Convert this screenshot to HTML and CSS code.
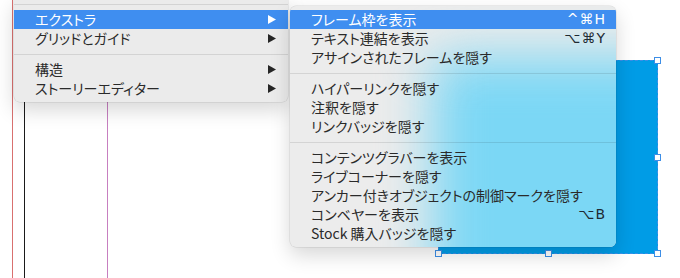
FILE: index.html
```html
<!DOCTYPE html>
<html lang="ja">
<head>
    <meta charset="UTF-8">
    <title>InDesign 表示メニュー</title>
    <link rel="stylesheet" href="styles.css">
</head>
<body>
    <div class="canvas">
        <!-- guides on the page -->
        <div class="guide guide-red"></div>
        <div class="guide guide-black"></div>
        <div class="guide guide-pink"></div>

        <!-- selected frame -->
        <div class="frame">
            <span class="handle h-tl"></span>
            <span class="handle h-tr"></span>
            <span class="handle h-mr"></span>
            <span class="handle h-bl"></span>
            <span class="handle h-bm"></span>
            <span class="handle h-br"></span>
        </div>

        <!-- main menu -->
        <div class="menu menu-main">
            <div class="sep"></div>
            <div class="item active"><span>エクストラ</span><svg class="arrow" viewBox="0 0 8 9"><polygon points="0,0 8,4.5 0,9"/></svg></div>
            <div class="item"><span>グリッドとガイド</span><svg class="arrow" viewBox="0 0 8 9"><polygon points="0,0 8,4.5 0,9"/></svg></div>
            <div class="sep"></div>
            <div class="item"><span>構造</span><svg class="arrow" viewBox="0 0 8 9"><polygon points="0,0 8,4.5 0,9"/></svg></div>
            <div class="item"><span>ストーリーエディター</span><svg class="arrow" viewBox="0 0 8 9"><polygon points="0,0 8,4.5 0,9"/></svg></div>
        </div>

        <!-- submenu (the ::before glow is the blurred frame showing through) -->
        <div class="menu menu-sub">
            <div class="item active"><span>フレーム枠を表示</span><span class="key">^⌘H</span></div>
            <div class="item"><span>テキスト連結を表示</span><span class="key">⌥⌘Y</span></div>
            <div class="item"><span>アサインされたフレームを隠す</span></div>
            <div class="sep"></div>
            <div class="item"><span>ハイパーリンクを隠す</span></div>
            <div class="item"><span>注釈を隠す</span></div>
            <div class="item"><span>リンクバッジを隠す</span></div>
            <div class="sep"></div>
            <div class="item"><span>コンテンツグラバーを表示</span></div>
            <div class="item"><span>ライブコーナーを隠す</span></div>
            <div class="item"><span>アンカー付きオブジェクトの制御マークを隠す</span></div>
            <div class="item"><span>コンベヤーを表示</span><span class="key">⌥B</span></div>
            <div class="item"><span>Stock 購入バッジを隠す</span></div>
        </div>
    </div>
</body>
</html>
```
FILE: styles.css
```css
/* page canvas behind the menus */
body {
    margin: 0;
    background: #ffffff;
    font-family: "Noto Sans CJK JP", "Noto Sans", sans-serif;
    overflow: hidden;
}
.canvas {
    position: relative;
    width: 680px;
    height: 278px;
}
.guide {
    position: absolute;
    top: 0;
    bottom: 0;
    width: 1px;
}
.guide-red { left: 12px; background: #d9706f; }
.guide-black { left: 24px; background: #1a1a1a; }
.guide-pink { left: 107px; background: #c77fc0; }

/* the selected blue frame */
.frame {
    position: absolute;
    left: 438px;
    top: 60px;
    width: 220px;
    height: 194px;
    box-sizing: border-box;
    background: #009ce6;
    border: 1px dashed #3d8ee6;
}
.handle {
    position: absolute;
    width: 5px;
    height: 5px;
    background: #ffffff;
    border: 1px solid #3d8ee6;
}
.h-tl { left: -4px; top: -4px; }
.h-tr { right: -4px; top: -4px; }
.h-mr { right: -4px; top: 93px; }
.h-bl { left: -4px; bottom: -4px; }
.h-bm { left: 106px; bottom: -4px; }
.h-br { right: -4px; bottom: -4px; }

/* menus */
.menu {
    position: absolute;
    display: flex;
    flex-direction: column;
    box-sizing: border-box;
    border-radius: 6px;
    font-size: 14px;
    color: #2a2a2a;
    font-feature-settings: "palt";
    box-shadow: 0 0 0 0.5px rgba(0,0,0,0.12), 0 8px 20px rgba(0,0,0,0.16);
}
.menu-main {
    left: 14px;
    top: -2px;
    width: 274px;
    padding-bottom: 4px;
    background: #ebebeb;
    border-radius: 0 0 6px 6px;
}
.menu-sub {
    left: 290px;
    top: 6px;
    width: 326px;
    padding: 4px 0;
    background: #ececec;
    overflow: hidden;
}
.menu-sub::before {
    content: "";
    position: absolute;
    left: 142px;
    top: 50px;
    width: 320px;
    height: 280px;
    background: #7bd7f5;
    filter: blur(26px);
}
.item {
    position: relative;
    height: 19px;
    display: flex;
    align-items: center;
    justify-content: space-between;
    padding: 0 12px 0 21px;
    line-height: 19px;
    white-space: nowrap;
}
.menu-sub .item {
    padding-right: 10px;
}
.item.active {
    background: #3f8ef0;
    color: #ffffff;
}
.sep {
    position: relative;
    height: 12px;
    display: flex;
    align-items: center;
}
.sep::after {
    content: "";
    flex: 1;
    height: 1px;
    background: rgba(0, 0, 0, 0.1);
}
.arrow {
    width: 8px;
    height: 9px;
    fill: #262626;
}
.active .arrow {
    fill: #ffffff;
}
.key {
    font-family: "DejaVu Sans", sans-serif;
    font-size: 14px;
    letter-spacing: 1px;
    color: #1e2a33;
}
.active .key {
    color: #ffffff;
}
```
